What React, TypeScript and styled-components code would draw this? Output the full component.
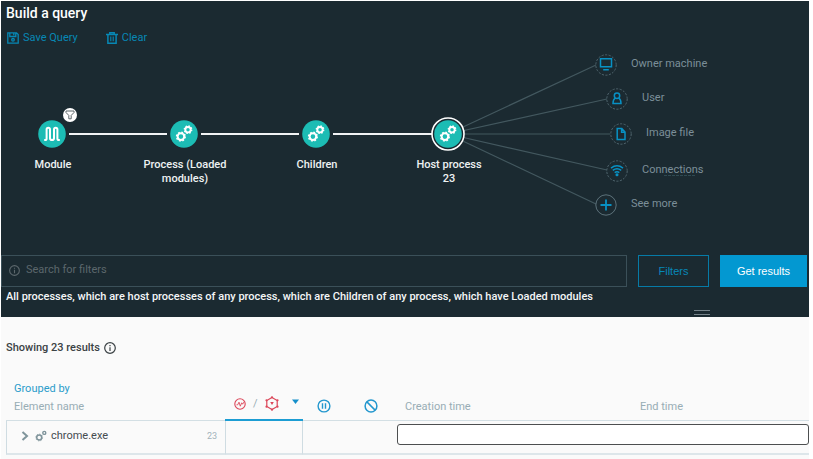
import React from "react";
import styled, { createGlobalStyle } from "styled-components";

const GlobalStyle = createGlobalStyle`
  *, *::before, *::after { box-sizing: border-box; }
  body {
    margin: 0;
    background: #fff;
    font-family: Roboto, "Liberation Sans", sans-serif;
    font-size: 11px;
    line-height: 14px;
  }
  button, input { font: inherit; }
  svg { flex-shrink: 0; }
`;

const Page = styled.div`
  padding: 1px 4px 0 1px;
`;

const BuilderPanel = styled.section`
  background: #1b2a31;
  display: flex;
  flex-direction: column;
`;

const BuilderHeader = styled.header`
  padding: 3px 5px 0;
`;

const Title = styled.h1`
  margin: 0;
  color: #fff;
  font-size: 14px;
  line-height: 18px;
  font-weight: 500;
`;

const Toolbar = styled.div`
  display: flex;
  gap: 28px;
  padding: 9px 1px 4px;
`;

const ToolButton = styled.button`
  display: flex;
  align-items: center;
  gap: 4px;
  padding: 0;
  border: 0;
  background: none;
  color: #0788b5;
  cursor: pointer;
`;

const Canvas = styled.div`
  position: relative;
  height: 206px;
  overflow: hidden;
`;

const Wires = styled.svg`
  position: absolute;
  left: 0;
  top: 0;
`;

const NodeBox = styled.div<{ $x: number; $y: number }>`
  position: absolute;
  left: ${(p) => p.$x - 50}px;
  top: ${(p) => p.$y - 17}px;
  width: 100px;
  display: flex;
  flex-direction: column;
  align-items: center;
  gap: 7px;
`;

const NodeLabel = styled.div`
  width: 84px;
  margin-left: 2px;
  color: #eef2f3;
  font-weight: 500;
  text-align: center;
`;

const LabelLine = styled.span`
  display: block;
`;

const Badge = styled.div<{ $x: number; $y: number }>`
  position: absolute;
  left: ${(p) => p.$x - 7}px;
  top: ${(p) => p.$y - 7}px;
  width: 14px;
  height: 14px;
`;

const LinkNode = styled.div<{ $x: number; $y: number }>`
  position: absolute;
  left: ${(p) => p.$x - 11}px;
  top: ${(p) => p.$y - 11}px;
  display: flex;
  align-items: flex-start;
  gap: 14px;
  color: #7b8f99;
  white-space: nowrap;
`;

const LinkLabel = styled.span`
  padding-top: 3px;
`;

const FilterRow = styled.div`
  display: flex;
  padding-right: 2px;
`;

const SearchBox = styled.label`
  flex: 1;
  min-width: 0;
  height: 32px;
  display: flex;
  align-items: center;
  gap: 6px;
  padding: 0 7px 2px;
  margin-right: 11px;
  border: 1px solid #3b5059;
  color: #5c676c;
`;

const SearchInput = styled.input`
  flex: 1;
  min-width: 0;
  padding: 0;
  border: 0;
  outline: 0;
  background: none;
  color: #c5d0d5;
  &::placeholder { color: #5c676c; opacity: 1; }
`;

const ActionButton = styled.button<{ $primary?: boolean }>`
  height: 32px;
  width: ${(p) => (p.$primary ? 87 : 71)}px;
  margin-right: ${(p) => (p.$primary ? 0 : 11)}px;
  padding: 0;
  border: 1px solid ${(p) => (p.$primary ? "#0398d1" : "#067ba7")};
  background: ${(p) => (p.$primary ? "#0398d1" : "transparent")};
  color: ${(p) => (p.$primary ? "#fff" : "#0788b9")};
  font-family: "Liberation Sans", Arial, sans-serif;
  cursor: pointer;
`;

const Summary = styled.p`
  margin: 0;
  padding: 3px 5px 0;
  color: #f4f6f7;
  font-weight: 500;
`;

const GripRow = styled.div`
  display: flex;
  justify-content: flex-end;
  padding: 6px 99px 2px 0;
`;

const Grip = styled.div`
  width: 16px;
  height: 5px;
  border: solid #76838a;
  border-width: 1px 0;
`;

const Results = styled.section`
  background: #fafafa;
  padding: 24px 0 6px 5px;
`;

const ResultsTitle = styled.h2`
  display: flex;
  align-items: center;
  gap: 4px;
  margin: 0;
  color: #3b4245;
  font-size: 11px;
  line-height: 14px;
  font-weight: 500;
`;

const Table = styled.table`
  width: 100%;
  margin-top: 25px;
  border-collapse: separate;
  border-spacing: 0;
  table-layout: fixed;
`;

const Col = styled.col<{ $w?: string }>`
  width: ${(p) => p.$w ?? "auto"};
`;

const HeadCell = styled.th<{ $sorted?: boolean }>`
  height: 41px;
  padding: ${(p) => (p.$sorted ? "0 0 6px 8px" : "0 8px 6px")};
  border-bottom: ${(p) => (p.$sorted ? "2px solid #1c9dd3" : "1px solid #d3dfe4")};
  vertical-align: bottom;
  text-align: left;
  font-weight: 400;
  color: #98adb5;
`;

const GroupButton = styled.button`
  display: block;
  margin-bottom: 4px;
  padding: 0;
  border: 0;
  background: none;
  color: #2a9cca;
  cursor: pointer;
`;

const IconButton = styled.button`
  display: flex;
  align-items: center;
  padding: 0;
  border: 0;
  background: none;
  cursor: pointer;
`;

const SortGroup = styled.div`
  display: flex;
  align-items: center;
  gap: 7px;
  padding: 0 0 2px 1px;
`;

const SortButton = styled(IconButton)`
  margin-left: 6px;
  padding-bottom: 3px;
`;

const IconHead = styled.div`
  padding-left: 6px;
  padding-bottom: 1px;
  display: flex;
`;

const Cell = styled.td<{ $left?: boolean; $right?: boolean }>`
  height: 34px;
  padding: 0;
  border-bottom: 2px solid #dde6ea;
  border-left: ${(p) => (p.$left ? "1px solid #cfdce2" : "0")};
  border-right: ${(p) => (p.$right ? "1px solid #cfdce2" : "0")};
`;

const NameRow = styled.div`
  display: flex;
  align-items: center;
  padding: 0 8px 2px 14px;
  color: #454c50;
`;

const Count = styled.span`
  margin-left: auto;
  color: #a3b3ba;
  font-size: 9px;
`;

const ProcessName = styled.span`
  margin-left: 4px;
`;

const ProcessIcon = styled.span`
  display: flex;
  margin-left: 6px;
`;

const TimeField = styled.input`
  display: block;
  width: 100%;
  height: 21px;
  margin-bottom: 5px;
  padding: 0 8px;
  border: 1px solid #4d4f50;
  border-radius: 3px;
  background: #fff;
`;

const SaveIcon = () => (
  <svg width="12" height="12" viewBox="0 0 12 12" fill="none" stroke="currentColor" strokeWidth="1.3" aria-hidden>
    <path d="M.8.8h8.7l1.7 1.8v8.6H.8zM2.8.8v3.7h6V.8M6.8 1.5v1.8" />
    <circle cx="6" cy="7.8" r="1.3" />
  </svg>
);

const TrashIcon = () => (
  <svg width="12" height="12" viewBox="0 0 12 12" fill="none" stroke="currentColor" strokeWidth="1.5" aria-hidden>
    <path d="M0 2.5h12M3.8 2.2V.8h4.4v1.4M1.9 2.6v8.6h8.2V2.6" />
    <path d="M4.8 4.6v4.6M7.2 4.6v4.6" strokeWidth="1.1" />
  </svg>
);

const InfoIcon = ({ size = 11 }: { size?: number }) => (
  <svg width={size} height={size} viewBox="0 0 12 12" fill="none" stroke="currentColor" strokeWidth="1.2" aria-hidden>
    <circle cx="6" cy="6" r="5.3" />
    <path d="M6 5.2v3.8M6 2.9v1.3" />
  </svg>
);

const Gear = ({ x, y, r, w }: { x: number; y: number; r: number; w: number }) => {
  const step = (2 * Math.PI * (r + w / 2)) / 16;
  return (
    <g fill="none" stroke="#fff">
      <circle cx={x} cy={y} r={r} strokeWidth={w} />
      <circle cx={x} cy={y} r={r + w / 2} strokeWidth={w * 0.8} strokeDasharray={`${step} ${step}`} />
    </g>
  );
};

const ProcessDisc = ({ ring }: { ring?: boolean }) => (
  <svg width="34" height="34" viewBox="-3 -3 34 34" aria-hidden>
    {ring && <circle cx="14" cy="14" r="16" fill="#1b2a31" stroke="#fff" strokeWidth="1.6" />}
    <circle cx="14" cy="14" r="13.8" fill="#1cbcb4" />
    <Gear x={10.9} y={16.6} r={3.3} w={2} />
    <Gear x={18} y={9.7} r={2.7} w={1.9} />
  </svg>
);

const ModuleDisc = () => (
  <svg width="34" height="34" viewBox="-3 -3 34 34" aria-hidden>
    <circle cx="14" cy="14" r="13.8" fill="#1cbcb4" />
    <path
      d="M6.2 20h.8q1.600 0 1.600-1.600V9.600q0-1.800 1.700-1.800t1.700 1.800v8.600q0 1.800 2 1.800t2-1.800V9.600q0-1.800 1.700-1.800t1.700 1.800v8.800q0 1.600 1.600 1.600h.8"
      fill="none"
      stroke="#fff"
      strokeWidth="2"
    />
  </svg>
);

const FunnelBadge = () => (
  <svg width="14" height="14" viewBox="0 0 14 14" aria-hidden>
    <circle cx="7" cy="7" r="7" fill="#fff" />
    <path d="M3 3h8v1.500L8.200 7.400v3.400H5.800V7.400L3 4.500z" fill="none" stroke="#5d666a" />
  </svg>
);

type LinkKind = "machine" | "user" | "file" | "wifi" | "more";

const glyphs: Record<LinkKind, React.ReactNode> = {
  machine: <path d="M5.500 4.800h11v8h-11zM8.200 15.700h5.600" />,
  user: (
    <>
      <circle cx="11" cy="7.700" r="2.700" />
      <path d="M9.200 10.200Q7 11.500 7 15.500h8Q15 11.500 12.800 10.200" />
    </>
  ),
  file: <path d="M7.200 5.600h4.600l3.200 3.400v7.500H7.200zM11.600 5.600V9.200H15" />,
  wifi: (
    <>
      <path d="M5 8.100q6-4.600 12 0M6.800 10.400q4.200-3.200 8.400 0M8.700 12.600q2.300-1.800 4.600 0" />
      <circle cx="11" cy="14.700" r=".8" fill="#0891c4" />
    </>
  ),
  more: <path d="M11 5.500v11M5.500 11h11" strokeWidth="1.800" />,
};

const LinkIcon = ({ kind }: { kind: LinkKind }) => (
  <svg width="22" height="22" viewBox="0 0 22 22" fill="none" aria-hidden>
    <circle
      cx="11"
      cy="11"
      r="10.200"
      fill="#1b2a31"
      stroke={kind === "more" ? "#5d727b" : "#51666f"}
      strokeDasharray={kind === "more" ? undefined : "2.200 1.400"}
    />
    <g stroke="#0891c4" strokeWidth="1.500">{glyphs[kind]}</g>
  </svg>
);

const ChevronIcon = () => (
  <svg width="8" height="10" viewBox="0 0 8 10" fill="none" stroke="#7f949b" strokeWidth="2" aria-hidden>
    <path d="M1.500 1l4.500 4-4.500 4" />
  </svg>
);

const SmallGears = () => (
  <svg width="12" height="12" viewBox="0 0 12 12" fill="none" stroke="#7f949b" aria-hidden>
    <circle cx="4.200" cy="7.500" r="2.500" strokeWidth="1.500" />
    <circle cx="4.200" cy="7.500" r="3.400" strokeWidth=".8" strokeDasharray="1.300 1.300" />
    <circle cx="9.300" cy="2.900" r="1.500" strokeWidth="1.400" />
  </svg>
);

const MalopIcon = () => (
  <svg width="12" height="12" viewBox="0 0 12 12" fill="none" stroke="#dc4659" aria-hidden>
    <circle cx="6" cy="6" r="5.200" strokeWidth="1.100" />
    <path d="M2.500 6.800h1.200L5 4.200l1.300 4L7.700 4.800l1 1.400 1-2" strokeWidth=".9" />
  </svg>
);

const HexIcon = () => (
  <svg width="14" height="15" viewBox="0 0 14 15" fill="none" stroke="#dc4659" aria-hidden>
    <path d="M7 1.500l5.200 3v6L7 13.500l-5.200-3v-6z" strokeWidth="1.200" />
    <path d="M5.200 6h3.600L7 9z" fill="#dc4659" stroke="none" />
    <g fill="#dc4659" stroke="none">
      <circle cx="7" cy="1.300" r="1.100" />
      <circle cx="12.500" cy="4.300" r="1.100" />
      <circle cx="12.500" cy="10.700" r="1.100" />
      <circle cx="7" cy="13.700" r="1.100" />
      <circle cx="1.500" cy="10.700" r="1.100" />
      <circle cx="1.500" cy="4.300" r="1.100" />
    </g>
  </svg>
);

const CaretIcon = () => (
  <svg width="7" height="8" viewBox="0 0 7 8" aria-hidden>
    <path d="M0 1.500h7L3.500 6z" fill="#158fca" />
  </svg>
);

const PauseIcon = () => (
  <svg width="14" height="14" viewBox="0 0 14 14" fill="none" stroke="#2397ce" strokeWidth="1.400" aria-hidden>
    <circle cx="7" cy="7" r="5.900" />
    <path d="M5.500 4.200v5.600M8.500 4.200v5.600" />
  </svg>
);

const BlockIcon = () => (
  <svg width="14" height="14" viewBox="0 0 14 14" fill="none" stroke="#2397ce" strokeWidth="1.500" aria-hidden>
    <circle cx="7" cy="7" r="5.900" />
    <path d="M2.900 2.900l8.200 8.200" />
  </svg>
);

const nodes = [
  { x: 51, lines: ["Module"], icon: <ModuleDisc /> },
  { x: 183, lines: ["Process (Loaded", "modules)"], icon: <ProcessDisc /> },
  { x: 315, lines: ["Children"], icon: <ProcessDisc /> },
  { x: 447, lines: ["Host process", "23"], icon: <ProcessDisc ring /> },
];

const links: { x: number; y: number; kind: LinkKind; label: string }[] = [
  { x: 605, y: 16, kind: "machine", label: "Owner machine" },
  { x: 616, y: 50, kind: "user", label: "User" },
  { x: 620, y: 85, kind: "file", label: "Image file" },
  { x: 616, y: 122, kind: "wifi", label: "Connections" },
  { x: 605, y: 156, kind: "more", label: "See more" },
];

const QueryGraph = () => (
  <Canvas>
    <Wires width="809" height="206" fill="none" aria-hidden>
      <path d="M68 85h98M200 85h98M332 85h100" stroke="#f1f3f4" strokeWidth="2" />
      <path
        d="M447 85L595 16M447 85L606 50M447 85h162M447 85L606 121M447 85L595 155"
        stroke="#43585f"
        strokeWidth="1.200"
      />
      <path d="M663 126.500h32" stroke="#2f4a52" strokeDasharray="3 1" />
    </Wires>
    {nodes.map((n) => (
      <NodeBox key={n.lines[0]} $x={n.x} $y={85}>
        {n.icon}
        <NodeLabel>
          {n.lines.map((line) => (
            <LabelLine key={line}>{line}</LabelLine>
          ))}
        </NodeLabel>
      </NodeBox>
    ))}
    <Badge $x={69} $y={66}>
      <FunnelBadge />
    </Badge>
    {links.map((l) => (
      <LinkNode key={l.label} $x={l.x} $y={l.y}>
        <LinkIcon kind={l.kind} />
        <LinkLabel>{l.label}</LinkLabel>
      </LinkNode>
    ))}
  </Canvas>
);

const ResultsTable = () => (
  <Table>
    <colgroup>
      <Col $w="219px" />
      <Col $w="78px" />
      <Col $w="47px" />
      <Col $w="47px" />
      <Col $w="235px" />
      <Col />
    </colgroup>
    <thead>
      <tr>
        <HeadCell scope="col">
          <GroupButton type="button">Grouped by</GroupButton>
          Element name
        </HeadCell>
        <HeadCell scope="col" $sorted>
          <SortGroup>
            <MalopIcon />
            <span>/</span>
            <HexIcon />
            <SortButton type="button" aria-label="Sort">
              <CaretIcon />
            </SortButton>
          </SortGroup>
        </HeadCell>
        <HeadCell scope="col" aria-label="Suspended">
          <IconHead>
            <PauseIcon />
          </IconHead>
        </HeadCell>
        <HeadCell scope="col" aria-label="Blocked">
          <IconHead>
            <BlockIcon />
          </IconHead>
        </HeadCell>
        <HeadCell scope="col">Creation time</HeadCell>
        <HeadCell scope="col">End time</HeadCell>
      </tr>
    </thead>
    <tbody>
      <tr>
        <Cell $left>
          <NameRow>
            <IconButton type="button" aria-label="Expand">
              <ChevronIcon />
            </IconButton>
            <ProcessIcon>
              <SmallGears />
            </ProcessIcon>
            <ProcessName>chrome.exe</ProcessName>
            <Count>23</Count>
          </NameRow>
        </Cell>
        <Cell $left $right />
        <Cell />
        <Cell />
        <Cell colSpan={2}>
          <TimeField type="text" aria-label="Creation and end time" />
        </Cell>
      </tr>
    </tbody>
  </Table>
);

export default function App() {
  return (
    <Page>
      <GlobalStyle />
      <BuilderPanel>
        <BuilderHeader>
          <Title>Build a query</Title>
          <Toolbar>
            <ToolButton type="button">
              <SaveIcon />
              Save Query
            </ToolButton>
            <ToolButton type="button">
              <TrashIcon />
              Clear
            </ToolButton>
          </Toolbar>
        </BuilderHeader>
        <QueryGraph />
        <FilterRow>
          <SearchBox>
            <InfoIcon />
            <SearchInput type="text" placeholder="Search for filters" aria-label="Search for filters" />
          </SearchBox>
          <ActionButton type="button">Filters</ActionButton>
          <ActionButton type="button" $primary>
            Get results
          </ActionButton>
        </FilterRow>
        <Summary>
          All processes, which are host processes of any process, which are Children of any process, which have Loaded
          modules
        </Summary>
        <GripRow>
          <Grip />
        </GripRow>
      </BuilderPanel>
      <Results>
        <ResultsTitle>
          Showing 23 results
          <InfoIcon size={12} />
        </ResultsTitle>
        <ResultsTable />
      </Results>
    </Page>
  );
}
